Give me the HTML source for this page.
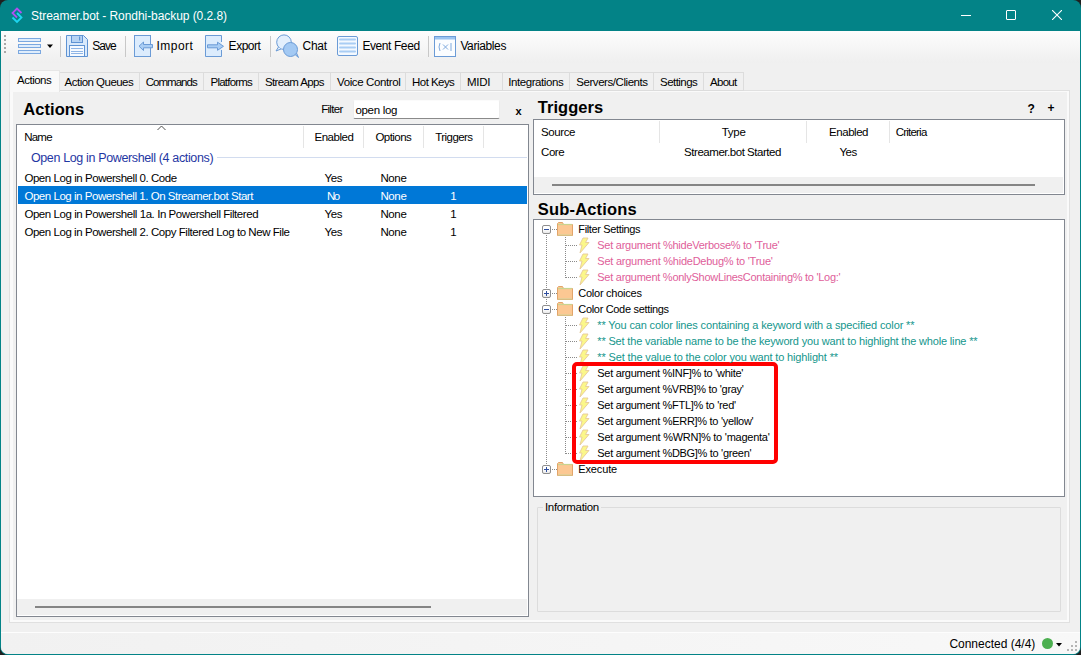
<!DOCTYPE html>
<html><head><meta charset="utf-8">
<style>
html,body{margin:0;padding:0}
body{width:1081px;height:655px;overflow:hidden;position:relative;background:#1f1f1f;font-family:"Liberation Sans",sans-serif}
.a{position:absolute;box-sizing:border-box}
.t{position:absolute;white-space:pre;line-height:1;font-family:"Liberation Sans",sans-serif;color:#000}
</style></head><body>
<div class="a" style="left:0;top:0;width:1081px;height:655px;border-radius:8px;background:#038387;overflow:hidden">
  <!-- client -->
  <div class="a" style="left:1px;top:31px;width:1079px;height:623px;background:#f0f0f0;border-radius:0 0 7px 7px"></div>
  <!-- toolbar gradient -->
  <div class="a" style="left:1px;top:31px;width:1079px;height:32px;background:linear-gradient(#fdfdfd,#efefef)"></div>
</div>

<!-- title icon -->
<svg class="a" style="left:10px;top:6px" width="16" height="18" viewBox="0 0 16 18">
  <path d="M11.5 7 L7 2.5 L2.5 7 L7 11.5" fill="none" stroke="#b04ff0" stroke-width="1.8"/>
  <path d="M7 7 L11.5 11.5 L7 16 L2.5 11.5" fill="none" stroke="#1ed6f0" stroke-width="1.8"/>
</svg>
<!-- window controls -->
<div class="a" style="left:961px;top:15px;width:10px;height:1px;background:#fff"></div>
<div class="a" style="left:1006px;top:10px;width:10px;height:10px;border:1px solid #fff;border-radius:1px"></div>
<svg class="a" style="left:1052px;top:10px" width="10" height="10" viewBox="0 0 10 10"><path d="M0 0 L10 10 M10 0 L0 10" stroke="#fff" stroke-width="1.1"/></svg>

<!-- toolbar grip -->
<div class="a" style="left:4px;top:35px;width:2px;height:18px;background:repeating-linear-gradient(#a8a8a8 0 2px,transparent 2px 4px)"></div>
<!-- hamburger -->
<div class="a" style="left:18px;top:38px;width:23px;height:4px;border:1px solid #7ba8e0;background:#dfedfc;border-radius:0"></div>
<div class="a" style="left:18px;top:44px;width:23px;height:4px;border:1px solid #7ba8e0;background:#dfedfc;border-radius:0"></div>
<div class="a" style="left:18px;top:50px;width:23px;height:4px;border:1px solid #7ba8e0;background:#dfedfc;border-radius:0"></div>
<svg class="a" style="left:47px;top:44px" width="7" height="5"><path d="M0 0.5 H6 L3 4 Z" fill="#000"/></svg>
<!-- separators -->
<div class="a" style="left:60px;top:36px;width:1px;height:21px;background:#c8c8c8"></div>
<div class="a" style="left:125px;top:36px;width:1px;height:21px;background:#c8c8c8"></div>
<div class="a" style="left:270px;top:36px;width:1px;height:21px;background:#c8c8c8"></div>
<div class="a" style="left:428px;top:36px;width:1px;height:21px;background:#c8c8c8"></div>
<!-- save icon -->
<svg class="a" style="left:66px;top:35px" width="22" height="22" viewBox="0 0 22 22">
  <path d="M0.5 0.5 H17.5 L21.5 4.5 V21.5 H0.5 Z" fill="#d9e9fb" stroke="#5f93d3"/>
  <rect x="5.5" y="0.5" width="11" height="7" fill="#b7d3f3" stroke="#5f93d3"/>
  <rect x="13" y="1.5" width="1.2" height="4" fill="#5f93d3"/>
  <rect x="3.5" y="10.5" width="15" height="11" fill="#f6faff" stroke="#5f93d3"/>
  <path d="M5 13.5 H17 M5 16.5 H17 M5 18.5 H17" stroke="#8fb5e6"/>
</svg>
<!-- import icon -->
<svg class="a" style="left:134px;top:35px" width="20" height="22" viewBox="0 0 20 22">
  <rect x="0.5" y="0.5" width="16" height="21" fill="#dcecfd" stroke="#6b9bd6"/>
  <path d="M18.5 9.5 H9.5 V7 L5 11.2 L9.5 15.5 V12.8 H18.5 Z" fill="#a9cdf4" stroke="#6b9bd6" stroke-linejoin="round"/>
</svg>
<!-- export icon -->
<svg class="a" style="left:205px;top:35px" width="20" height="22" viewBox="0 0 20 22">
  <path d="M16.5 7 V0.5 H0.5 V21.5 H16.5 V15" fill="#dcecfd" stroke="#6b9bd6"/>
  <path d="M2.5 9.8 H12.5 V7.2 L18.5 11.3 L12.5 15.3 V12.8 H2.5 Z" fill="#a9cdf4" stroke="#6b9bd6" stroke-linejoin="round"/>
</svg>
<!-- chat icon -->
<svg class="a" style="left:275px;top:34px" width="25" height="24" viewBox="0 0 25 24">
  <circle cx="9" cy="8.2" r="7.3" fill="#e3effc" stroke="#6b9bd6"/>
  <path d="M3.5 13 L1 17 L6 15" fill="#e3effc" stroke="#6b9bd6" stroke-linejoin="round"/>
  <circle cx="15.5" cy="15.5" r="7" fill="#a3c9f3" stroke="#6b9bd6"/>
  <path d="M20 20.5 L23.5 23.5 L21.5 19" fill="#a3c9f3" stroke="#6b9bd6" stroke-linejoin="round"/>
</svg>
<!-- event feed icon -->
<svg class="a" style="left:337px;top:36px" width="21" height="20" viewBox="0 0 21 20">
  <rect x="0.5" y="0.5" width="20" height="19" rx="1.5" fill="#f4f9ff" stroke="#6b9bd6"/>
  <path d="M3 3.5 H18 M3 7.5 H18 M3 11.5 H18 M3 15.5 H18" stroke="#a9cdf4" stroke-width="2" stroke-linecap="round"/>
</svg>
<!-- variables icon -->
<svg class="a" style="left:434px;top:36px" width="22" height="21" viewBox="0 0 22 21">
  <rect x="0.5" y="0.5" width="21" height="20" fill="#fbfdff" stroke="#6b9bd6"/>
  <rect x="1" y="1" width="20" height="2.5" fill="#9cc4f0"/>
  <path d="M6 7 Q4 11 6 15 M9 8.5 L14 13.5 M14 8.5 L9 13.5 M17 7 V15" fill="none" stroke="#7ea9dd" stroke-width="1"/>
</svg>

<!-- tabs -->
<div class="a" style="left:9px;top:90px;width:1061px;height:533px;border:1px solid #e0e0e0;background:#fafafa"></div>
<div class="a" style="left:13px;top:92px;width:1054px;height:528px;background:#f0f0f0"></div>
<div class="a" style="left:59px;top:72px;width:685px;height:19px;border:1px solid #dcdcdc;border-bottom:none;background:#f0f0f0"></div>
<div class="a" style="left:139px;top:73px;width:1px;height:17px;background:#dcdcdc"></div>
<div class="a" style="left:203px;top:73px;width:1px;height:17px;background:#dcdcdc"></div>
<div class="a" style="left:258px;top:73px;width:1px;height:17px;background:#dcdcdc"></div>
<div class="a" style="left:330px;top:73px;width:1px;height:17px;background:#dcdcdc"></div>
<div class="a" style="left:405px;top:73px;width:1px;height:17px;background:#dcdcdc"></div>
<div class="a" style="left:460px;top:73px;width:1px;height:17px;background:#dcdcdc"></div>
<div class="a" style="left:502px;top:73px;width:1px;height:17px;background:#dcdcdc"></div>
<div class="a" style="left:569px;top:73px;width:1px;height:17px;background:#dcdcdc"></div>
<div class="a" style="left:653px;top:73px;width:1px;height:17px;background:#dcdcdc"></div>
<div class="a" style="left:703px;top:73px;width:1px;height:17px;background:#dcdcdc"></div>
<div class="a" style="left:90px;top:90px;width:0;height:0"></div>
<div class="a" style="left:59px;top:90px;width:685px;height:1px;background:#dcdcdc"></div>
<div class="a" style="left:9px;top:70px;width:51px;height:22px;border:1px solid #e6e6e6;border-bottom:none;background:#f9f9f9"></div>

<!-- filter textbox -->
<div class="a" style="left:353px;top:100px;width:147px;height:19px;background:#fff;border:1px solid #ececec;border-top-color:#fbfbfb;border-bottom:1px solid #8a8a8a;border-radius:2px"></div>

<!-- actions listview -->
<div class="a" style="left:16px;top:124px;width:513px;height:493px;border:1px solid #828790;background:#fff"></div>
<svg class="a" style="left:157px;top:125px" width="9" height="6"><path d="M0.5 5 L4.5 1 L8.5 5" fill="none" stroke="#505050"/></svg>
<div class="a" style="left:303px;top:126px;width:1px;height:22px;background:#e5e5e5"></div>
<div class="a" style="left:363px;top:126px;width:1px;height:22px;background:#e5e5e5"></div>
<div class="a" style="left:423px;top:126px;width:1px;height:22px;background:#e5e5e5"></div>
<div class="a" style="left:483px;top:126px;width:1px;height:22px;background:#e5e5e5"></div>
<div class="a" style="left:217px;top:157px;width:310px;height:1px;background:#d2dcef"></div>
<div class="a" style="left:18px;top:186px;width:509px;height:18px;background:#0078d7"></div>
<div class="a" style="left:17px;top:599px;width:510px;height:16px;background:#f0f0f0"></div>
<div class="a" style="left:35px;top:606px;width:396px;height:2px;background:#858585"></div>

<!-- triggers listview -->
<div class="a" style="left:533px;top:119px;width:532px;height:76px;border:1px solid #828790;background:#fff"></div>
<div class="a" style="left:659px;top:121px;width:1px;height:22px;background:#e5e5e5"></div>
<div class="a" style="left:806px;top:121px;width:1px;height:22px;background:#e5e5e5"></div>
<div class="a" style="left:889px;top:121px;width:1px;height:22px;background:#e5e5e5"></div>
<div class="a" style="left:534px;top:177px;width:529px;height:16px;background:#f0f0f0"></div>
<div class="a" style="left:552px;top:184px;width:483px;height:2px;background:#858585"></div>

<!-- tree -->
<div class="a" style="left:533px;top:219px;width:532px;height:278px;border:1px solid #828790;background:#fff"></div>
<div id="tree"></div>
<div class="a" style="left:542px;top:225px;width:9px;height:9px;border:1px solid #8e8e8e;border-radius:2px;background:linear-gradient(#fff 50%,#e8e8e8)"></div><div class="a" style="left:544px;top:229px;width:5px;height:1px;background:#2f4f9f"></div>
<div class="a" style="left:552px;top:229px;width:5px;height:1px;background:repeating-linear-gradient(90deg,#8a8a8a 0 1px,transparent 1px 2px)"></div>
<svg class="a" style="left:557px;top:222px" width="17" height="14" viewBox="0 0 17 14"><path d="M0.5 1.5 V13.5 H15.5 V2.5 H6.5 L5.5 0.5 H1.5 Z" fill="#fcc893" stroke="#e2a56a"/><path d="M1 2.5 H15" stroke="#c9d48f" stroke-width="1.2"/><path d="M1 13 H15" stroke="#cfd59a" stroke-width="1"/></svg>
<div class="a" style="left:566px;top:245px;width:11px;height:1px;background:repeating-linear-gradient(90deg,#8a8a8a 0 1px,transparent 1px 2px)"></div>
<svg class="a" style="left:578px;top:237px" width="12" height="17" viewBox="0 0 12 17"><path d="M5 1 H10 L7.5 5.5 L11 5.5 L2 16 L4 8 L1.5 8 Z" fill="#fbf78a" stroke="#e6c99a" stroke-width="0.9" stroke-linejoin="round"/></svg>
<div class="a" style="left:566px;top:261px;width:11px;height:1px;background:repeating-linear-gradient(90deg,#8a8a8a 0 1px,transparent 1px 2px)"></div>
<svg class="a" style="left:578px;top:253px" width="12" height="17" viewBox="0 0 12 17"><path d="M5 1 H10 L7.5 5.5 L11 5.5 L2 16 L4 8 L1.5 8 Z" fill="#fbf78a" stroke="#e6c99a" stroke-width="0.9" stroke-linejoin="round"/></svg>
<div class="a" style="left:566px;top:277px;width:11px;height:1px;background:repeating-linear-gradient(90deg,#8a8a8a 0 1px,transparent 1px 2px)"></div>
<svg class="a" style="left:578px;top:269px" width="12" height="17" viewBox="0 0 12 17"><path d="M5 1 H10 L7.5 5.5 L11 5.5 L2 16 L4 8 L1.5 8 Z" fill="#fbf78a" stroke="#e6c99a" stroke-width="0.9" stroke-linejoin="round"/></svg>
<div class="a" style="left:542px;top:289px;width:9px;height:9px;border:1px solid #8e8e8e;border-radius:2px;background:linear-gradient(#fff 50%,#e8e8e8)"></div><div class="a" style="left:544px;top:293px;width:5px;height:1px;background:#2f4f9f"></div>
<div class="a" style="left:546px;top:291px;width:1px;height:5px;background:#2f4f9f"></div>
<div class="a" style="left:552px;top:293px;width:5px;height:1px;background:repeating-linear-gradient(90deg,#8a8a8a 0 1px,transparent 1px 2px)"></div>
<svg class="a" style="left:557px;top:286px" width="17" height="14" viewBox="0 0 17 14"><path d="M0.5 1.5 V13.5 H15.5 V2.5 H6.5 L5.5 0.5 H1.5 Z" fill="#fcc893" stroke="#e2a56a"/><path d="M1 2.5 H15" stroke="#c9d48f" stroke-width="1.2"/><path d="M1 13 H15" stroke="#cfd59a" stroke-width="1"/></svg>
<div class="a" style="left:542px;top:305px;width:9px;height:9px;border:1px solid #8e8e8e;border-radius:2px;background:linear-gradient(#fff 50%,#e8e8e8)"></div><div class="a" style="left:544px;top:309px;width:5px;height:1px;background:#2f4f9f"></div>
<div class="a" style="left:552px;top:309px;width:5px;height:1px;background:repeating-linear-gradient(90deg,#8a8a8a 0 1px,transparent 1px 2px)"></div>
<svg class="a" style="left:557px;top:302px" width="17" height="14" viewBox="0 0 17 14"><path d="M0.5 1.5 V13.5 H15.5 V2.5 H6.5 L5.5 0.5 H1.5 Z" fill="#fcc893" stroke="#e2a56a"/><path d="M1 2.5 H15" stroke="#c9d48f" stroke-width="1.2"/><path d="M1 13 H15" stroke="#cfd59a" stroke-width="1"/></svg>
<div class="a" style="left:566px;top:325px;width:11px;height:1px;background:repeating-linear-gradient(90deg,#8a8a8a 0 1px,transparent 1px 2px)"></div>
<svg class="a" style="left:578px;top:317px" width="12" height="17" viewBox="0 0 12 17"><path d="M5 1 H10 L7.5 5.5 L11 5.5 L2 16 L4 8 L1.5 8 Z" fill="#fbf78a" stroke="#e6c99a" stroke-width="0.9" stroke-linejoin="round"/></svg>
<div class="a" style="left:566px;top:341px;width:11px;height:1px;background:repeating-linear-gradient(90deg,#8a8a8a 0 1px,transparent 1px 2px)"></div>
<svg class="a" style="left:578px;top:333px" width="12" height="17" viewBox="0 0 12 17"><path d="M5 1 H10 L7.5 5.5 L11 5.5 L2 16 L4 8 L1.5 8 Z" fill="#fbf78a" stroke="#e6c99a" stroke-width="0.9" stroke-linejoin="round"/></svg>
<div class="a" style="left:566px;top:357px;width:11px;height:1px;background:repeating-linear-gradient(90deg,#8a8a8a 0 1px,transparent 1px 2px)"></div>
<svg class="a" style="left:578px;top:349px" width="12" height="17" viewBox="0 0 12 17"><path d="M5 1 H10 L7.5 5.5 L11 5.5 L2 16 L4 8 L1.5 8 Z" fill="#fbf78a" stroke="#e6c99a" stroke-width="0.9" stroke-linejoin="round"/></svg>
<div class="a" style="left:566px;top:373px;width:11px;height:1px;background:repeating-linear-gradient(90deg,#8a8a8a 0 1px,transparent 1px 2px)"></div>
<svg class="a" style="left:578px;top:365px" width="12" height="17" viewBox="0 0 12 17"><path d="M5 1 H10 L7.5 5.5 L11 5.5 L2 16 L4 8 L1.5 8 Z" fill="#fbf78a" stroke="#e6c99a" stroke-width="0.9" stroke-linejoin="round"/></svg>
<div class="a" style="left:566px;top:389px;width:11px;height:1px;background:repeating-linear-gradient(90deg,#8a8a8a 0 1px,transparent 1px 2px)"></div>
<svg class="a" style="left:578px;top:381px" width="12" height="17" viewBox="0 0 12 17"><path d="M5 1 H10 L7.5 5.5 L11 5.5 L2 16 L4 8 L1.5 8 Z" fill="#fbf78a" stroke="#e6c99a" stroke-width="0.9" stroke-linejoin="round"/></svg>
<div class="a" style="left:566px;top:405px;width:11px;height:1px;background:repeating-linear-gradient(90deg,#8a8a8a 0 1px,transparent 1px 2px)"></div>
<svg class="a" style="left:578px;top:397px" width="12" height="17" viewBox="0 0 12 17"><path d="M5 1 H10 L7.5 5.5 L11 5.5 L2 16 L4 8 L1.5 8 Z" fill="#fbf78a" stroke="#e6c99a" stroke-width="0.9" stroke-linejoin="round"/></svg>
<div class="a" style="left:566px;top:421px;width:11px;height:1px;background:repeating-linear-gradient(90deg,#8a8a8a 0 1px,transparent 1px 2px)"></div>
<svg class="a" style="left:578px;top:413px" width="12" height="17" viewBox="0 0 12 17"><path d="M5 1 H10 L7.5 5.5 L11 5.5 L2 16 L4 8 L1.5 8 Z" fill="#fbf78a" stroke="#e6c99a" stroke-width="0.9" stroke-linejoin="round"/></svg>
<div class="a" style="left:566px;top:437px;width:11px;height:1px;background:repeating-linear-gradient(90deg,#8a8a8a 0 1px,transparent 1px 2px)"></div>
<svg class="a" style="left:578px;top:429px" width="12" height="17" viewBox="0 0 12 17"><path d="M5 1 H10 L7.5 5.5 L11 5.5 L2 16 L4 8 L1.5 8 Z" fill="#fbf78a" stroke="#e6c99a" stroke-width="0.9" stroke-linejoin="round"/></svg>
<div class="a" style="left:566px;top:453px;width:11px;height:1px;background:repeating-linear-gradient(90deg,#8a8a8a 0 1px,transparent 1px 2px)"></div>
<svg class="a" style="left:578px;top:445px" width="12" height="17" viewBox="0 0 12 17"><path d="M5 1 H10 L7.5 5.5 L11 5.5 L2 16 L4 8 L1.5 8 Z" fill="#fbf78a" stroke="#e6c99a" stroke-width="0.9" stroke-linejoin="round"/></svg>
<div class="a" style="left:542px;top:465px;width:9px;height:9px;border:1px solid #8e8e8e;border-radius:2px;background:linear-gradient(#fff 50%,#e8e8e8)"></div><div class="a" style="left:544px;top:469px;width:5px;height:1px;background:#2f4f9f"></div>
<div class="a" style="left:546px;top:467px;width:1px;height:5px;background:#2f4f9f"></div>
<div class="a" style="left:552px;top:469px;width:5px;height:1px;background:repeating-linear-gradient(90deg,#8a8a8a 0 1px,transparent 1px 2px)"></div>
<svg class="a" style="left:557px;top:462px" width="17" height="14" viewBox="0 0 17 14"><path d="M0.5 1.5 V13.5 H15.5 V2.5 H6.5 L5.5 0.5 H1.5 Z" fill="#fcc893" stroke="#e2a56a"/><path d="M1 2.5 H15" stroke="#c9d48f" stroke-width="1.2"/><path d="M1 13 H15" stroke="#cfd59a" stroke-width="1"/></svg>
<div class="a" style="left:546px;top:235px;width:1px;height:53px;background:repeating-linear-gradient(#8a8a8a 0 1px,transparent 1px 2px)"></div>
<div class="a" style="left:546px;top:299px;width:1px;height:5px;background:repeating-linear-gradient(#8a8a8a 0 1px,transparent 1px 2px)"></div>
<div class="a" style="left:546px;top:315px;width:1px;height:149px;background:repeating-linear-gradient(#8a8a8a 0 1px,transparent 1px 2px)"></div>
<div class="a" style="left:565px;top:237px;width:1px;height:41px;background:repeating-linear-gradient(#8a8a8a 0 1px,transparent 1px 2px)"></div>
<div class="a" style="left:565px;top:317px;width:1px;height:137px;background:repeating-linear-gradient(#8a8a8a 0 1px,transparent 1px 2px)"></div>

<!-- information -->
<div class="a" style="left:537px;top:507px;width:524px;height:105px;border:1px solid #dcdcdc;border-radius:1px"></div>
<div class="a" style="left:543px;top:502px;width:58px;height:12px;background:#f0f0f0"></div>

<!-- red box -->
<div class="a" style="left:572px;top:362px;width:206px;height:102px;border:4px solid #ff0000;border-radius:5px"></div>

<!-- status bar -->
<div class="a" style="left:1px;top:632px;width:1079px;height:22px;background:linear-gradient(90deg,#f1f1f1,#f8f8f8);border-top:1px solid #fdfdfd;border-radius:0 0 7px 7px"></div>
<div class="a" style="left:1042px;top:638px;width:11px;height:11px;border-radius:50%;background:#4caf50"></div>
<svg class="a" style="left:1056px;top:643px" width="7" height="4"><path d="M0 0 H6 L3 3.5 Z" fill="#000"/></svg>
<svg class="a" style="left:1067px;top:641px" width="12" height="12"><g fill="#b5b5b5"><rect x="8" y="0" width="2" height="2"/><rect x="4" y="4" width="2" height="2"/><rect x="8" y="4" width="2" height="2"/><rect x="0" y="8" width="2" height="2"/><rect x="4" y="8" width="2" height="2"/><rect x="8" y="8" width="2" height="2"/></g></svg>

<div class="t" style="left:31.10px;top:10.34px;font-size:12px;letter-spacing:-0.063px;color:#fff">Streamer.bot - Rondhi-backup (0.2.8)</div>
<div class="t" style="left:92.30px;top:39.84px;font-size:12px;letter-spacing:-0.993px">Save</div>
<div class="t" style="left:156.40px;top:39.84px;font-size:12px;letter-spacing:0.505px">Import</div>
<div class="t" style="left:228.60px;top:39.84px;font-size:12px;letter-spacing:-0.470px">Export</div>
<div class="t" style="left:302.60px;top:39.84px;font-size:12px;letter-spacing:-0.305px">Chat</div>
<div class="t" style="left:362.40px;top:39.84px;font-size:12px;letter-spacing:-0.411px">Event Feed</div>
<div class="t" style="left:460.40px;top:39.84px;font-size:12px;letter-spacing:-0.392px">Variables</div>
<div class="t" style="left:17.00px;top:75.27px;font-size:11.5px;letter-spacing:-0.494px">Actions</div>
<div class="t" style="left:64.60px;top:76.77px;font-size:11.5px;letter-spacing:-0.524px">Action Queues</div>
<div class="t" style="left:145.70px;top:76.77px;font-size:11.5px;letter-spacing:-0.964px">Commands</div>
<div class="t" style="left:210.50px;top:76.77px;font-size:11.5px;letter-spacing:-0.777px">Platforms</div>
<div class="t" style="left:265.00px;top:76.77px;font-size:11.5px;letter-spacing:-0.642px">Stream Apps</div>
<div class="t" style="left:337.00px;top:76.77px;font-size:11.5px;letter-spacing:-0.387px">Voice Control</div>
<div class="t" style="left:412.10px;top:76.77px;font-size:11.5px;letter-spacing:-0.558px">Hot Keys</div>
<div class="t" style="left:467.00px;top:76.77px;font-size:11.5px;letter-spacing:-0.260px">MIDI</div>
<div class="t" style="left:508.30px;top:76.77px;font-size:11.5px;letter-spacing:-0.431px">Integrations</div>
<div class="t" style="left:576.30px;top:76.77px;font-size:11.5px;letter-spacing:-0.444px">Servers/Clients</div>
<div class="t" style="left:660.00px;top:76.77px;font-size:11.5px;letter-spacing:-0.543px">Settings</div>
<div class="t" style="left:710.00px;top:76.77px;font-size:11.5px;letter-spacing:-0.714px">About</div>
<div class="t" style="left:23.20px;top:101.03px;font-size:16.5px;letter-spacing:0.079px;font-weight:bold">Actions</div>
<div class="t" style="left:537.80px;top:99.03px;font-size:16.5px;letter-spacing:0.039px;font-weight:bold">Triggers</div>
<div class="t" style="left:537.80px;top:200.53px;font-size:16.5px;letter-spacing:0.171px;font-weight:bold">Sub-Actions</div>
<div class="t" style="left:321.20px;top:103.77px;font-size:11.5px;letter-spacing:-0.705px">Filter</div>
<div class="t" style="left:355.40px;top:104.77px;font-size:11.5px;letter-spacing:-0.290px">open log</div>
<div class="t" style="left:515.50px;top:105.69px;font-size:11px;letter-spacing:0.400px;font-weight:bold">x</div>
<div class="t" style="left:1027.50px;top:102.84px;font-size:12px;letter-spacing:1.300px;font-weight:bold">?</div>
<div class="t" style="left:1047.40px;top:102.34px;font-size:12px;letter-spacing:1.000px;font-weight:bold">+</div>
<div class="t" style="left:24.20px;top:131.77px;font-size:11.5px;letter-spacing:-0.760px">Name</div>
<div class="t" style="left:314.50px;top:132.07px;font-size:11.5px;letter-spacing:-0.485px">Enabled</div>
<div class="t" style="left:375.40px;top:132.07px;font-size:11.5px;letter-spacing:-0.530px">Options</div>
<div class="t" style="left:435.30px;top:132.07px;font-size:11.5px;letter-spacing:-0.571px">Triggers</div>
<div class="t" style="left:30.90px;top:151.92px;font-size:12.5px;letter-spacing:-0.360px;color:#1f37a3">Open Log in Powershell (4 actions)</div>
<div class="t" style="left:24.40px;top:172.77px;font-size:11.5px;letter-spacing:-0.441px">Open Log in Powershell 0. Code</div>
<div class="t" style="left:324.40px;top:172.77px;font-size:11.5px;letter-spacing:-0.355px">Yes</div>
<div class="t" style="left:380.40px;top:172.77px;font-size:11.5px;letter-spacing:-0.365px">None</div>
<div class="t" style="left:24.40px;top:190.77px;font-size:11.5px;letter-spacing:-0.455px;color:#fff">Open Log in Powershell 1. On Streamer.bot Start</div>
<div class="t" style="left:327.00px;top:190.77px;font-size:11.5px;letter-spacing:-1.605px;color:#fff">No</div>
<div class="t" style="left:380.40px;top:190.77px;font-size:11.5px;letter-spacing:-0.365px;color:#fff">None</div>
<div class="t" style="left:450.30px;top:190.77px;font-size:11.5px;letter-spacing:0.000px;color:#fff">1</div>
<div class="t" style="left:24.40px;top:208.77px;font-size:11.5px;letter-spacing:-0.435px">Open Log in Powershell 1a. In Powershell Filtered</div>
<div class="t" style="left:324.40px;top:208.77px;font-size:11.5px;letter-spacing:-0.355px">Yes</div>
<div class="t" style="left:380.40px;top:208.77px;font-size:11.5px;letter-spacing:-0.365px">None</div>
<div class="t" style="left:450.30px;top:208.77px;font-size:11.5px;letter-spacing:0.000px">1</div>
<div class="t" style="left:24.40px;top:226.77px;font-size:11.5px;letter-spacing:-0.444px">Open Log in Powershell 2. Copy Filtered Log to New File</div>
<div class="t" style="left:324.40px;top:226.77px;font-size:11.5px;letter-spacing:-0.355px">Yes</div>
<div class="t" style="left:380.40px;top:226.77px;font-size:11.5px;letter-spacing:-0.365px">None</div>
<div class="t" style="left:450.30px;top:226.77px;font-size:11.5px;letter-spacing:0.000px">1</div>
<div class="t" style="left:541.10px;top:127.27px;font-size:11.5px;letter-spacing:-0.428px">Source</div>
<div class="t" style="left:721.70px;top:127.27px;font-size:11.5px;letter-spacing:-0.245px">Type</div>
<div class="t" style="left:829.10px;top:127.27px;font-size:11.5px;letter-spacing:-0.468px">Enabled</div>
<div class="t" style="left:895.70px;top:127.27px;font-size:11.5px;letter-spacing:-0.781px">Criteria</div>
<div class="t" style="left:541.10px;top:147.27px;font-size:11.5px;letter-spacing:-0.477px">Core</div>
<div class="t" style="left:684.10px;top:147.27px;font-size:11.5px;letter-spacing:-0.464px">Streamer.bot Started</div>
<div class="t" style="left:839.50px;top:147.27px;font-size:11.5px;letter-spacing:-0.555px">Yes</div>
<div class="t" style="left:578.30px;top:223.69px;font-size:11px;letter-spacing:-0.360px">Filter Settings</div>
<div class="t" style="left:597.30px;top:239.69px;font-size:11px;letter-spacing:-0.263px;color:#e0609a">Set argument %hideVerbose% to &#x27;True&#x27;</div>
<div class="t" style="left:597.30px;top:255.69px;font-size:11px;letter-spacing:-0.241px;color:#e0609a">Set argument %hideDebug% to &#x27;True&#x27;</div>
<div class="t" style="left:597.30px;top:271.69px;font-size:11px;letter-spacing:-0.271px;color:#e0609a">Set argument %onlyShowLinesContaining% to &#x27;Log:&#x27;</div>
<div class="t" style="left:578.30px;top:287.69px;font-size:11px;letter-spacing:-0.253px">Color choices</div>
<div class="t" style="left:578.30px;top:303.69px;font-size:11px;letter-spacing:-0.322px">Color Code settings</div>
<div class="t" style="left:597.30px;top:319.69px;font-size:11px;letter-spacing:-0.137px;color:#14968c">** You can color lines containing a keyword with a specified color **</div>
<div class="t" style="left:597.30px;top:335.69px;font-size:11px;letter-spacing:-0.167px;color:#14968c">** Set the variable name to be the keyword you want to highlight the whole line **</div>
<div class="t" style="left:597.30px;top:351.69px;font-size:11px;letter-spacing:-0.141px;color:#14968c">** Set the value to the color you want to highlight **</div>
<div class="t" style="left:597.30px;top:367.69px;font-size:11px;letter-spacing:-0.296px">Set argument %INF]% to &#x27;white&#x27;</div>
<div class="t" style="left:597.30px;top:383.69px;font-size:11px;letter-spacing:-0.308px">Set argument %VRB]% to &#x27;gray&#x27;</div>
<div class="t" style="left:597.30px;top:399.69px;font-size:11px;letter-spacing:-0.291px">Set argument %FTL]% to &#x27;red&#x27;</div>
<div class="t" style="left:597.30px;top:415.69px;font-size:11px;letter-spacing:-0.286px">Set argument %ERR]% to &#x27;yellow&#x27;</div>
<div class="t" style="left:597.30px;top:431.69px;font-size:11px;letter-spacing:-0.251px">Set argument %WRN]% to &#x27;magenta&#x27;</div>
<div class="t" style="left:597.30px;top:447.69px;font-size:11px;letter-spacing:-0.306px">Set argument %DBG]% to &#x27;green&#x27;</div>
<div class="t" style="left:578.30px;top:463.69px;font-size:11px;letter-spacing:-0.138px">Execute</div>
<div class="t" style="left:545.00px;top:502.27px;font-size:11.5px;letter-spacing:-0.333px">Information</div>
<div class="t" style="left:949.40px;top:638.34px;font-size:12px;letter-spacing:-0.011px">Connected (4/4)</div>
</body></html>
